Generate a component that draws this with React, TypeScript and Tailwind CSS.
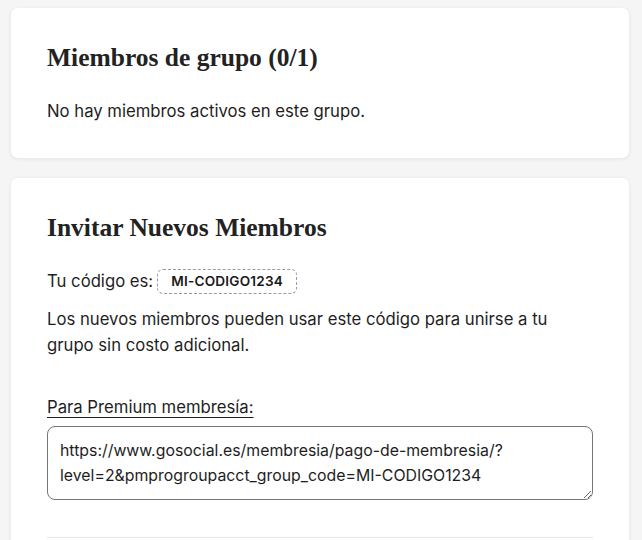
import React from "react";

export default function App() {
  const url =
    "https://www.gosocial.es/membresia/pago-de-membresia/?level=2&pmprogroupacct_group_code=MI-CODIGO1234";
  return (
    <div
      className="min-h-[540px] w-[642px] bg-[#f5f5f5] pt-[8px] text-[#1e1e1e]"
      style={{ fontFamily: "Inter, 'Noto Sans', sans-serif" }}
    >
      <div className="ml-[11px] w-[618px]">
        <section className="rounded-[7px] bg-white px-9 pt-8 pb-[34px] shadow-[0_1px_4px_rgba(0,0,0,0.08)]">
          <h2
            className="text-[25.5px] leading-[36px] font-bold text-[#222]"
            style={{ fontFamily: "'Liberation Serif', serif" }}
          >
            Miembros de grupo (0/1)
          </h2>
          <p className="mt-[22px] text-[16.7px] leading-[26px]">
            No hay miembros activos en este grupo.
          </p>
        </section>

        <section className="mt-[20px] h-[400px] rounded-t-[7px] bg-white px-9 pt-8 shadow-[0_1px_4px_rgba(0,0,0,0.08)]">
          <h2
            className="text-[25.5px] leading-[36px] font-bold text-[#222]"
            style={{ fontFamily: "'Liberation Serif', serif" }}
          >
            Invitar Nuevos Miembros
          </h2>
          <div className="mt-[22px] flex items-center text-[16.7px] leading-[26px]">
            <span>Tu código es:</span>
            <span className="ml-[4px] flex h-[25px] items-center rounded-[6px] border border-dashed border-[#9a9a9a] px-[13px] text-[13.6px] font-semibold tracking-[0.2px] text-[#1a1a1a]">
              MI-CODIGO1234
            </span>
          </div>
          <p className="mt-[12px] text-[16.7px] leading-[26px]">
            Los nuevos miembros pueden usar este código para unirse a tu grupo sin costo adicional.
          </p>
          <div className="mt-[36px] text-[16.7px] leading-[26px]">
            <span className="underline decoration-1 underline-offset-[4px]">Para Premium membresía:</span>
          </div>
          <textarea
            readOnly
            value={url}
            className="mt-[6px] block h-[74px] w-full resize-y rounded-[8px] border border-[#767676] bg-white px-[12px] pt-[11px] pb-[11px] text-[15.85px] leading-[25px] text-[#1e1e1e] outline-none"
            style={{ fontFamily: "Inter, 'Noto Sans', sans-serif" }}
          />
          <div className="mt-[37px] h-[20px] border-t border-[#e5e5e5]" />
        </section>
      </div>
    </div>
  );
}
